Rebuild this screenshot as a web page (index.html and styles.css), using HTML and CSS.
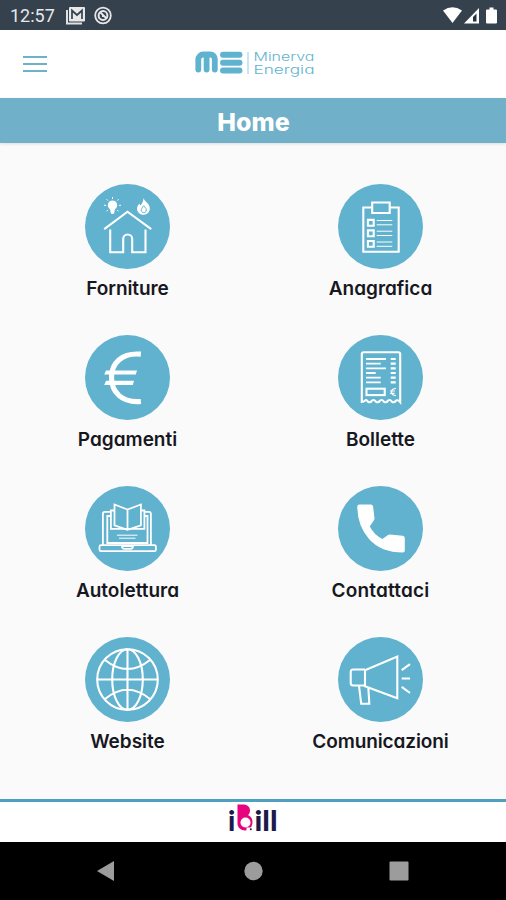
FILE: index.html
```html
<!DOCTYPE html>
<html lang="it">
<head>
  <meta charset="UTF-8">
  <meta name="viewport" content="width=device-width, initial-scale=1">
  <title>Minerva Energia</title>
  <link rel="stylesheet" href="styles.css">
</head>
<body>

<div class="status-bar">
  <span class="clock">12:57</span>
  <svg class="notify" width="50" height="20" viewBox="0 0 50 20">
    <path d="M2 4v13.500h15" fill="none" stroke="#dfe1e4" stroke-width="2"/>
    <rect x="4" y="1" width="16" height="14.500" rx="1" fill="#e6e8ea"/>
    <path d="M7 13V4.500l5 4.500 5-4.500V13" fill="none" stroke="#35414d" stroke-width="1.700"/>
    <circle cx="38" cy="9.500" r="7.800" fill="none" stroke="#e6e8ea" stroke-width="1.800"/>
    <circle cx="38" cy="9.500" r="4.400" fill="none" stroke="#e6e8ea" stroke-width="2"/>
    <path d="M35 6l6.500 6.500M37 10h2" stroke="#e6e8ea" stroke-width="1.800"/>
  </svg>
  <svg class="system" width="56" height="18" viewBox="0 0 56 18">
    <path d="M0 3.500Q9.500-3 19 3.500L9.500 16z" fill="#fff"/>
    <path d="M21 16.500L36 1v15.500z" fill="#fff"/>
    <path d="M30 14.500V10l3.500-3.500v8z" fill="#26323d"/>
    <path d="M44 2.500h2.500V.5h4v2H53a1 1 0 0 1 1 1v12a1 1 0 0 1-1 1h-9a1 1 0 0 1-1-1v-12a1 1 0 0 1 1-1z" fill="#fff"/>
  </svg>
</div>

<header class="top">
  <div class="menu"><i></i><i></i><i></i></div>
  <svg class="logo" width="122" height="30" viewBox="0 0 122 30">
    <path d="M3.300 20.500V10.500a5 5 0 0 1 5-5h7a4.500 4.500 0 0 1 4.500 4.500v10.500M11.600 6v14.500" fill="none" stroke="#5fb3cf" stroke-width="5.800" stroke-linecap="round"/>
    <path d="M28 5.800h16.500M28 13.800h16.500M28 21.500h16.500" stroke="#5fb3cf" stroke-width="5.900" stroke-linecap="round"/>
    <path d="M53 3v22" stroke="#a9d6e4" stroke-width="1.200"/>
    <text x="58.500" y="11.500" textLength="61" lengthAdjust="spacingAndGlyphs">Minerva</text>
    <text x="58.500" y="24.500" textLength="61" lengthAdjust="spacingAndGlyphs">Energia</text>
  </svg>
</header>

<h1>Home</h1>

<main class="grid">
  <a class="tile">
    <svg viewBox="0 0 85 85">
      <circle class="disc" cx="42.500" cy="42.500" r="42.500"/>
      <path d="M19.200 45.200L42.500 27.700l23.700 17.500M25.200 45.500v22.700h13V55a4.500 4.500 0 0 1 9 0v13.200h13.300V45.500"/>
      <path class="solid" d="M27.500 16.500a4.700 4.700 0 0 0-3 8.300c.8.800 1 1.700 1 3.200a2 2 0 0 0 4 0c0-1.500.2-2.400 1-3.200a4.700 4.700 0 0 0-3-8.300z"/>
      <path class="thin" d="M27.500 13v2M21.500 15.200l1.400 1.400M33.500 15.200l-1.400 1.400M19 21.300h2M34 21.300h2M21.500 27.300l1.400-1.400M33.500 27.300l-1.400-1.400"/>
      <path class="solid" d="M58.500 14c.5 3 5 4.800 6 8.600 1.200 4.500-1.500 8.200-5.800 8.200s-7.500-3.400-6.500-7.600c.4-1.600 1.300-2.400 2-3.700.5 1 .8 1.500 1.200 2 1.700-2 3-4 3.100-7.500z"/>
      <path class="thin hollow" d="M58.600 21.800c2.400 2 3 3.500 2.500 5.200-.6 2.200-4.300 2.200-4.800-.2-.4-1.700 1-3.200 2.300-5z"/>
    </svg>
    <span class="snug">Forniture</span>
  </a>
  <a class="tile">
    <svg viewBox="0 0 85 85">
      <circle class="disc" cx="42.500" cy="42.500" r="42.500"/>
      <path d="M33.500 23.500h-8.200v44.200h35.400V23.500h-8.500"/>
      <path d="M34.200 29v-10.500h17.500V29z"/>
      <path d="M29.900 35.900h5.800v5.800h-5.800zM29.900 46.400h5.800v5.800h-5.800zM29.900 57h5.800v5.800h-5.800z"/>
      <path class="thin" d="M38.700 36.500h15.600M38.700 40.800h15.600M38.700 47.200h15.600M38.700 51.500h15.600M38.700 58h15.600M38.700 62.300h15.600"/>
    </svg>
    <span>Anagrafica</span>
  </a>
  <a class="tile">
    <svg viewBox="0 0 85 85">
      <circle class="disc" cx="42.500" cy="42.500" r="42.500"/>
      <path d="M55.900 19.200C37 17.500 26.500 28 26.500 42.600S37 68.200 55.900 66.500" stroke-width="5.200"/>
      <path class="solid" d="M21 35.400h31l-1.200 4.200H19.200zM21 45.700h28l-1.200 4.200H19.200z"/>
    </svg>
    <span>Pagamenti</span>
  </a>
  <a class="tile">
    <svg viewBox="0 0 85 85">
      <circle class="disc" cx="42.500" cy="42.500" r="42.500"/>
      <path d="M23.800 67V19.300a2 2 0 0 1 2-2h34.400a2 2 0 0 1 2 2V67q-2-2.500-4-1.500-2 2.500-4 1.500-2-3-4-1.500-2 2.500-4 1.500-2-3-4-1.500-2 2.500-4 1.500-2-3-4-1.500-2 2.500-4 1.500-2-3-3-1.500-1.800 1.500-3.400 1.500z"/>
      <path d="M28 24h20M28 28.700h14.700M28 33.300h20M28 38h9.700M28 42.700h14.700M28 47.300h14.700" stroke-width="1.800"/>
      <path d="M52.700 24h5M52.700 28.700h5M52.700 33.300h5M52.700 38h5M52.700 42.700h5M52.700 47.300h5" stroke-width="2.200"/>
      <rect x="28.500" y="53.700" width="18.200" height="6.400"/>
      <path d="M58 53.500q-4.500 0-4.500 3.500t4.500 3.500M52 56h5M52 58.300h4.500" stroke-width="1.200"/>
    </svg>
    <span>Bollette</span>
  </a>
  <a class="tile">
    <svg viewBox="0 0 85 85">
      <circle class="disc" cx="42.500" cy="42.500" r="42.500"/>
      <g stroke-width="1.800">
        <path d="M25.500 25.800h-5.600a2 2 0 0 0-2 2V59M59.500 25.800h4.400a2 2 0 0 1 2 2V59M25.500 30h-3.200v27h40.200V30h-3.200"/>
        <path d="M29.500 24.500h-3.600v18.300h33.500V24.500h-3.500"/>
        <path d="M42.500 23.500l-13-5v20.800l13 4.500 13.400-4.500V18.500zM42.500 23.500v20.300"/>
        <rect x="14.500" y="59.200" width="56.400" height="6" rx="1.500"/>
        <path d="M37 60q0 2.800 2.500 2.800h6Q48 62.800 48 60z"/>
      </g>
      <path class="thin" d="M31.900 49.200h20.600M34 52.200h16.500"/>
    </svg>
    <span>Autolettura</span>
  </a>
  <a class="tile">
    <svg viewBox="0 0 85 85">
      <circle class="disc" cx="42.500" cy="42.500" r="42.500"/>
      <path class="solid" d="M21.300 18.500h11.500q2 0 2.300 2l1.400 12q.1 1-.6 1.800L31.800 40.500q4 8 12.600 12.600l5.600-4.200q.8-.6 1.800-.5l13 1.300q2 .3 2 2.300v12.500q0 2-2 2Q43 66.500 31 53 19.300 39.500 19.300 20.500q0-2 2-2z"/>
    </svg>
    <span class="loose">Contattaci</span>
  </a>
  <a class="tile">
    <svg viewBox="0 0 85 85">
      <circle class="disc" cx="42.500" cy="42.500" r="42.500"/>
      <circle cx="42.500" cy="42.500" r="30.300"/>
      <ellipse cx="42.500" cy="42.500" rx="15.300" ry="30.300"/>
      <path d="M42.500 12.200v60.600M12.200 42.500h60.600M20 23q22.500 18 45 0M20 62q22.500-18.500 45 0"/>
    </svg>
    <span>Website</span>
  </a>
  <a class="tile">
    <svg viewBox="0 0 85 85">
      <circle class="disc" cx="42.500" cy="42.500" r="42.500"/>
      <path d="M27 33.200l32.300-13.700v41.700L27 49.200zM27 32.500H15.200a2.500 2.500 0 0 0-2.500 2.500v11a2.500 2.500 0 0 0 2.500 2.500H27M21 48.800l2.200 18h8.100l-1-16.500"/>
      <path d="M63.700 33.200l8.300-6M63.700 41.500H72M63.700 49.800l8.300 6.200"/>
    </svg>
    <span class="snug">Comunicazioni</span>
  </a>
</main>

<footer class="brand">
  <svg width="52" height="32" viewBox="0 0 52 32">
    <text x="0" y="27.500">i</text>
    <path d="M9.500 1.500H15c4.500 0 7 2.500 7 6 0 2-.8 3.500-2 4.500 3 1.200 4.500 3.800 4.500 7 0 5-3.500 8.500-7.500 8.500s-7.500-3-7.500-7z" fill="#e6057e"/>
    <circle cx="17.500" cy="19.500" r="5" fill="#fff"/>
    <path d="M18.500 24.500h6.500v3.200h-6.500z" fill="#fff"/>
    <circle cx="22.800" cy="26.300" r="1" fill="#1c1a4c"/>
    <text x="26.500" y="27.500" textLength="23" lengthAdjust="spacingAndGlyphs">ill</text>
  </svg>
</footer>

<nav class="android-nav">
  <svg viewBox="0 0 20 22"><path d="M18 1v20L1 11z"/></svg>
  <svg viewBox="0 0 20 22"><circle cx="10.500" cy="11" r="9.200"/></svg>
  <svg viewBox="0 0 20 22"><rect x=".5" y="1.500" width="19" height="19" rx="1"/></svg>
</nav>

</body>
</html>
```
FILE: styles.css
```css
* {
  box-sizing: border-box;
}

body {
  margin: 0;
  height: 900px;
  display: flex;
  flex-direction: column;
  background: #fafafa;
  font-family: Inter, "Liberation Sans", sans-serif;
  overflow: hidden;
}

.status-bar {
  height: 30px;
  background: #35414d;
  display: flex;
  align-items: center;
  padding: 1px 7px 0 10px;
}

.clock {
  font: 18px Roboto, sans-serif;
  color: #e6e8ea;
  width: 55px;
}

.system {
  margin-left: auto;
}

.top {
  height: 68px;
  background: #fff;
  display: flex;
  align-items: center;
  padding-left: 23px;
}

.menu {
  width: 24px;
  display: grid;
  gap: 5px;
}

.menu i {
  height: 2px;
  background: #70b1c9;
}

.logo {
  margin-left: 148px;
}

.logo text {
  font-family: Inter, sans-serif;
  font-size: 12px;
  font-weight: 300;
  font-feature-settings: "cv11";
  fill: #5fb3cf;
}

h1 {
  margin: 0;
  height: 45px;
  line-height: 48px;
  background: #70b1c9;
  color: #fff;
  text-align: center;
  font-size: 25px;
  font-weight: 800;
  padding-left: 1px;
  box-shadow: 0 1px 3px rgba(0, 0, 0, .12);
}

.grid {
  flex: 1;
  display: grid;
  grid-template-columns: 253px 253px;
  grid-template-rows: repeat(4, 151.200px);
  padding: 40.500px 0 0 1px;
}

.tile {
  display: flex;
  flex-direction: column;
  align-items: center;
}

.tile svg {
  width: 85px;
  height: 85px;
  fill: none;
  stroke: #fff;
  stroke-width: 2.100;
}

.tile .disc {
  fill: #60b2ce;
  stroke: none;
}

.tile .solid {
  fill: #fff;
  stroke: none;
}

.tile .thin {
  stroke-width: 1;
}

.tile .hollow {
  stroke: #60b2ce;
}

.tile span {
  margin-top: 8px;
  line-height: 24px;
  font-size: 19px;
  font-weight: 600;
  font-feature-settings: "cv11";
  color: #17181f;
}

.tile .snug {
  letter-spacing: -.1px;
}

.tile .loose {
  letter-spacing: .2px;
}

.brand {
  height: 43px;
  background: #fff;
  border-top: 3px solid #4f9fc0;
  display: flex;
  justify-content: center;
  padding: 1px 0 0 1px;
}

.brand text {
  font: 900 28px Lato, sans-serif;
  fill: #1c1a4c;
}

.android-nav {
  height: 58px;
  background: #000;
  display: flex;
  justify-content: space-between;
  align-items: center;
  padding: 0 97px 0 96px;
}

.android-nav svg {
  width: 20px;
  height: 22px;
  fill: #9c9c9c;
}
```
